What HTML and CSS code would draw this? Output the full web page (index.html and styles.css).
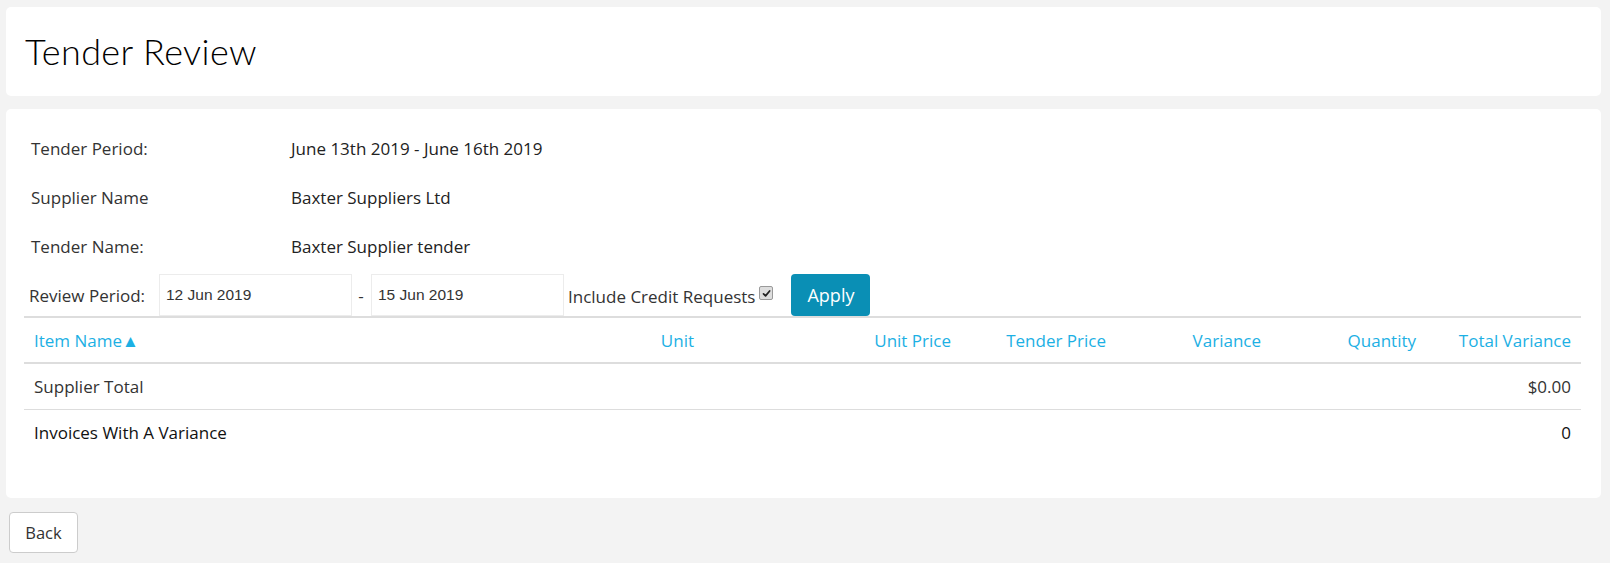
FILE: index.html
```html
<!DOCTYPE html>
<html lang="en">
<head>
<meta charset="utf-8">
<title>Tender Review</title>
<link rel="stylesheet" href="styles.css">
</head>
<body>
<div class="page">
  <div class="card title-card">
    <h1 class="title">Tender Review</h1>
  </div>
  <div class="card main-card">
    <div class="info-row"><span class="info-label">Tender Period:</span><span class="info-value">June 13th 2019 - June 16th 2019</span></div>
    <div class="info-row"><span class="info-label">Supplier Name</span><span class="info-value">Baxter Suppliers Ltd</span></div>
    <div class="info-row"><span class="info-label">Tender Name:</span><span class="info-value">Baxter Supplier tender</span></div>
    <div class="review-row">
      <span class="review-label">Review Period:</span>
      <div class="date-input">12 Jun 2019</div>
      <span class="dash">-</span>
      <div class="date-input">15 Jun 2019</div>
      <span class="credit-label">Include Credit Requests</span>
      <span class="checkbox"><svg viewBox="0 0 14 14" width="14" height="14"><path d="M3.2 7.4 L5.8 10 L11 3.8" fill="none" stroke="#222" stroke-width="2.2" stroke-linecap="round" stroke-linejoin="round"/></svg></span>
      <button class="apply-btn">Apply</button>
    </div>
    <table class="grid">
      <colgroup>
        <col>
        <col class="c-unit">
        <col class="c-uprice">
        <col class="c-std">
        <col class="c-std">
        <col class="c-std">
        <col class="c-std">
      </colgroup>
      <thead>
        <tr>
          <th class="left">Item Name<span class="sort">▲</span></th>
          <th>Unit</th>
          <th>Unit Price</th>
          <th>Tender Price</th>
          <th>Variance</th>
          <th>Quantity</th>
          <th>Total Variance</th>
        </tr>
      </thead>
      <tbody>
        <tr class="bordered">
          <td class="left">Supplier Total</td>
          <td></td><td></td><td></td><td></td><td></td>
          <td>$0.00</td>
        </tr>
        <tr>
          <td class="left dark">Invoices With A Variance</td>
          <td></td><td></td><td></td><td></td><td></td>
          <td class="dark">0</td>
        </tr>
      </tbody>
    </table>
  </div>
  <div class="footer">
    <button class="back-btn">Back</button>
  </div>
</div>
</body>
</html>
```

FILE: styles.css
```css
html, body {
  margin: 0;
  padding: 0;
  background: #f3f3f3;
}
body {
  font-family: "Open Sans", "Lato", sans-serif;
  color: #333;
  font-size: 17px;
}
.page {
  padding: 7px 9px 0 6px;
  display: flex;
  flex-direction: column;
}
.card {
  background: #fff;
  border-radius: 5px;
}
.title-card {
  height: 89px;
  display: flex;
  align-items: center;
  padding: 0 19px;
  margin-bottom: 13px;
}
.title {
  margin: 0;
  font-family: "Lato", sans-serif;
  font-weight: 300;
  font-size: 36px;
  color: #000;
  letter-spacing: 0.4px;
  padding-bottom: 1px;
}
.main-card {
  padding: 15px 20px 43px 18px;
}
.info-row {
  height: 49px;
  display: flex;
  align-items: center;
  padding-left: 7px;
  color: #333;
}
.info-label {
  width: 260px;
  flex: none;
}
.info-value {
  color: #222;
}
.review-row {
  margin-top: 3px;
  display: flex;
  align-items: center;
  height: 42px;
  padding-left: 5px;
}
.review-label {
  width: 130px;
  flex: none;
  color: #333;
}
.date-input {
  width: 185px;
  height: 40px;
  border: 1px solid #ececec;
  box-sizing: content-box;
  padding: 0 0 0 6px;
  display: flex;
  align-items: center;
  font-family: "Liberation Sans", Arial, sans-serif;
  font-size: 15.5px;
  color: #333;
}
.dash {
  width: 18px;
  text-align: center;
  color: #333;
  padding-right: 1px;
}
.credit-label {
  margin-left: 4px;
  color: #333;
  padding-top: 2px;
}
.checkbox {
  width: 12px;
  height: 12px;
  border: 1px solid #9a9a9a;
  border-radius: 2px;
  background: #dedede;
  margin-left: 4px;
  margin-top: -4px;
  display: flex;
  align-items: center;
  justify-content: center;
}
.checkbox svg {
  width: 11px;
  height: 11px;
}
.apply-btn {
  margin-left: 18px;
  width: 79px;
  height: 42px;
  border: none;
  border-radius: 4px;
  background: #0a8fb5;
  color: #fff;
  font-family: "Open Sans", sans-serif;
  font-size: 18px;
  padding: 0;
}
.grid {
  width: 100%;
  border-collapse: collapse;
  table-layout: fixed;
  border-top: 2px solid #dddddd;
}
.c-unit { width: 155px; }
.c-uprice { width: 257px; }
.c-std { width: 155px; }
.grid th, .grid td {
  padding: 0 10px;
  text-align: right;
  font-weight: 400;
  white-space: nowrap;
}
.grid th {
  height: 44px;
  color: #1cb0e4;
  border-bottom: 2px solid #dddddd;
}
.grid td {
  height: 45px;
  color: #333;
}
.grid .left {
  text-align: left;
}
.grid .dark {
  color: #111;
}
.grid tr.bordered td {
  border-bottom: 1px solid #dddddd;
}
.sort {
  font-size: 17px;
}
.footer {
  padding: 14px 0 0 3px;
}
.back-btn {
  width: 69px;
  height: 41px;
  background: #fff;
  border: 1px solid #cccccc;
  border-radius: 4px;
  font-family: "Open Sans", sans-serif;
  font-size: 16.5px;
  color: #333;
  padding: 0;
}
```
